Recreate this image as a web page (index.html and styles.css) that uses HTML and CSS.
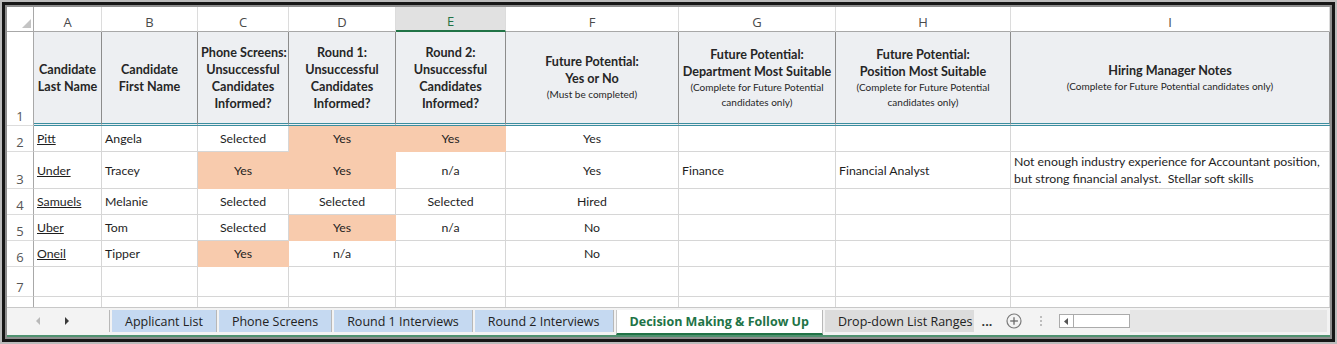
FILE: index.html
```html
<!DOCTYPE html>
<html lang="en">
<head>
  <meta charset="UTF-8">
  <meta name="viewport" content="width=device-width, initial-scale=1.0">
  <title>Decision Making &amp; Follow Up</title>
  <link rel="stylesheet" href="styles.css">
</head>
<body>
  <div class="frame">
    <div class="frame-mid">
      <div class="window">

        <!-- Worksheet grid -->
        <div class="sheet">
          <table class="grid">
            <colgroup>
              <col class="w-rn">
              <col class="w-a">
              <col class="w-b">
              <col class="w-c">
              <col class="w-d">
              <col class="w-e">
              <col class="w-f">
              <col class="w-g">
              <col class="w-h">
              <col class="w-i">
            </colgroup>
            <thead>
              <tr class="letters">
                <th class="corner"><div class="corner-box"><span class="corner-tri"></span></div></th>
                <th class="col">A</th>
                <th class="col">B</th>
                <th class="col">C</th>
                <th class="col">D</th>
                <th class="col sel">E</th>
                <th class="col">F</th>
                <th class="col">G</th>
                <th class="col">H</th>
                <th class="col">I</th>
              </tr>
            </thead>
            <tbody>
              <tr class="head">
                <th class="rn">1</th>
                <td>Candidate<br>Last Name</td>
                <td>Candidate<br>First Name</td>
                <td>Phone Screens:<br>Unsuccessful<br>Candidates<br>Informed?</td>
                <td>Round 1:<br>Unsuccessful<br>Candidates<br>Informed?</td>
                <td>Round 2:<br>Unsuccessful<br>Candidates<br>Informed?</td>
                <td>Future Potential:<br>Yes or No<span class="note">(Must be completed)</span></td>
                <td>Future Potential:<br>Department Most Suitable<span class="note">(Complete for Future Potential<br>candidates only)</span></td>
                <td>Future Potential:<br>Position Most Suitable<span class="note">(Complete for Future Potential<br>candidates only)</span></td>
                <td>Hiring Manager Notes<span class="note">(Complete for Future Potential candidates only)</span></td>
              </tr>
              <tr class="row">
                <th class="rn">2</th>
                <td class="link">Pitt</td>
                <td>Angela</td>
                <td class="c">Selected</td>
                <td class="c fill">Yes</td>
                <td class="c fill">Yes</td>
                <td class="c">Yes</td>
                <td></td>
                <td></td>
                <td></td>
              </tr>
              <tr class="row-tall">
                <th class="rn">3</th>
                <td class="link">Under</td>
                <td>Tracey</td>
                <td class="c fill">Yes</td>
                <td class="c fill">Yes</td>
                <td class="c">n/a</td>
                <td class="c">Yes</td>
                <td>Finance</td>
                <td>Financial Analyst</td>
                <td class="notes">Not enough industry experience for Accountant position,<br>but strong financial analyst.&nbsp; Stellar soft skills</td>
              </tr>
              <tr class="row">
                <th class="rn">4</th>
                <td class="link">Samuels</td>
                <td>Melanie</td>
                <td class="c">Selected</td>
                <td class="c">Selected</td>
                <td class="c">Selected</td>
                <td class="c">Hired</td>
                <td></td>
                <td></td>
                <td></td>
              </tr>
              <tr class="row">
                <th class="rn">5</th>
                <td class="link">Uber</td>
                <td>Tom</td>
                <td class="c">Selected</td>
                <td class="c fill">Yes</td>
                <td class="c">n/a</td>
                <td class="c">No</td>
                <td></td>
                <td></td>
                <td></td>
              </tr>
              <tr class="row">
                <th class="rn">6</th>
                <td class="link">Oneil</td>
                <td>Tipper</td>
                <td class="c fill">Yes</td>
                <td class="c">n/a</td>
                <td></td>
                <td class="c">No</td>
                <td></td>
                <td></td>
                <td></td>
              </tr>
              <tr class="row-end">
                <th class="rn">7</th>
                <td></td><td></td><td></td><td></td><td></td><td></td><td></td><td></td><td></td>
              </tr>
              <tr class="row">
                <th class="rn"></th>
                <td></td><td></td><td></td><td></td><td></td><td></td><td></td><td></td><td></td>
              </tr>
            </tbody>
          </table>
        </div>

        <!-- Sheet tabs + horizontal scroll -->
        <div class="tabbar">
          <div class="nav">
            <svg class="arrow" width="5" height="8" viewBox="0 0 5 8"><polygon points="4,0 4,8 0,4" fill="#b9b9b9"/></svg>
            <svg class="arrow" width="5" height="8" viewBox="0 0 5 8"><polygon points="0,0 0,8 4,4" fill="#3a3a3a"/></svg>
          </div>
          <div class="tabs">
            <div class="tab">Applicant List</div>
            <div class="tab">Phone Screens</div>
            <div class="tab">Round 1 Interviews</div>
            <div class="tab">Round 2 Interviews</div>
            <div class="tab active">Decision Making &amp; Follow Up</div>
            <div class="tab plain clip">Drop-down List Ranges</div>
          </div>
          <div class="more">...</div>
          <div class="add">
            <svg width="16" height="16" viewBox="0 0 16 16">
              <circle cx="8" cy="8" r="7" fill="none" stroke="#7a7a7a" stroke-width="1.2"/>
              <line x1="8" y1="4.2" x2="8" y2="11.8" stroke="#6a6a6a" stroke-width="1.3"/>
              <line x1="4.2" y1="8" x2="11.8" y2="8" stroke="#6a6a6a" stroke-width="1.3"/>
            </svg>
          </div>
          <div class="vdots"><span></span><span></span><span></span></div>
          <div class="hscroll">
            <div class="sb-btn">
              <svg width="4" height="7" viewBox="0 0 4 7"><polygon points="4,0 4,7 0,3.5" fill="#555"/></svg>
            </div>
            <div class="sb-thumb"></div>
          </div>
        </div>

      </div>
    </div>
  </div>
</body>
</html>
```

FILE: styles.css
```css
* {
  box-sizing: border-box;
}

body {
  margin: 0;
  width: 1337px;
  height: 344px;
  overflow: hidden;
  font-family: Lato, "Liberation Sans", sans-serif;
  background-color: #ffffff;
}

/* Window frame */
.frame {
  width: 1337px;
  height: 344px;
  border: 2px solid #bcbcbc;
}

.frame-mid {
  height: 100%;
  border: 3px solid #161616;
}

.window {
  height: 100%;
  display: flex;
  flex-direction: column;
  border: 2px solid #8e8e8e;
  background: #ffffff;
}

/* Grid */
.sheet {
  height: 300px;
  overflow: hidden;
}

.grid {
  width: 1323px;
  table-layout: fixed;
  border-collapse: separate;
  border-spacing: 0;
  font-size: 12.3px;
  color: #1e1e1e;
}

.w-rn { width: 27px; }
.w-a { width: 68px; }
.w-b { width: 96px; }
.w-c { width: 91px; }
.w-d { width: 107px; }
.w-e { width: 110px; }
.w-f { width: 173px; }
.w-g { width: 157px; }
.w-h { width: 175px; }
.w-i { width: 319px; }

.grid td,
.grid th {
  padding: 0 3px;
  border-right: 1px solid #d6d6d6;
  border-bottom: 1px solid #d6d6d6;
  white-space: nowrap;
  overflow: hidden;
  font-weight: 400;
}

/* Column letters */
.letters th {
  height: 25px;
  vertical-align: bottom;
}

.col {
  font-family: "Open Sans", sans-serif;
  font-size: 13px;
  line-height: 18px;
  color: #4a4a4a;
  text-align: center;
  border-right-color: #dcdcdc !important;
  border-bottom-color: #a8a8a8 !important;
}

.col.sel {
  background: #e1e1e1;
  color: #217346;
  border-bottom: 2px solid #217346 !important;
}

.corner {
  padding: 0 !important;
  border-right-color: #a8a8a8 !important;
  border-bottom-color: #a8a8a8 !important;
}

.corner-box {
  display: flex;
  justify-content: flex-end;
  align-items: flex-end;
  height: 24px;
  padding: 0 2px 3px 0;
}

.corner-tri {
  width: 0;
  height: 0;
  border-left: 9px solid transparent;
  border-bottom: 9px solid #c4c4c4;
}

/* Row numbers */
.rn {
  font-family: "Open Sans", sans-serif;
  font-size: 13px;
  line-height: 18px;
  color: #555555;
  text-align: center;
  vertical-align: bottom;
  padding: 0 !important;
  border-right-color: #a8a8a8 !important;
  border-bottom-color: #dcdcdc !important;
}

/* Heading row */
.head td {
  height: 94px;
  background: #edeff2;
  text-align: center;
  vertical-align: middle;
  font-size: 12.6px;
  font-weight: 700;
  line-height: 17px;
  color: #262626;
  border-right-color: #8c8c8c;
  border-bottom: 3px double #3b8e9f;
}

.head .rn {
  border-bottom: 1px solid #dcdcdc;
}

.note {
  display: block;
  font-size: 10px;
  font-weight: 400;
  line-height: 15px;
}

/* Data rows */
.row td, .row th { height: 26px; }
.row-tall td, .row-tall th { height: 37px; }
.row-end td, .row-end th { height: 30px; }

.grid td {
  vertical-align: middle;
}

.c {
  text-align: center;
}

.link {
  text-decoration: underline;
}

.fill {
  background: #f8cbad;
  border-right-color: #f8cbad !important;
  border-bottom-color: #f8cbad !important;
}

.notes {
  line-height: 17px;
}

/* Tab bar */
.tabbar {
  flex: 1;
  display: flex;
  align-items: stretch;
  padding: 2px 0 3px;
  background: #f3f3f3;
  border-top: 1px solid #c8c8c8;
  border-bottom: 2px solid #4f9270;
  font-family: "Open Sans", sans-serif;
  font-size: 12.5px;
  color: #222222;
}

.nav {
  width: 103px;
  display: flex;
  align-items: center;
  gap: 24px;
  padding-left: 29px;
  border-right: 1px solid #b8b8b8;
}

.tabs {
  display: flex;
}

.tab {
  display: flex;
  align-items: center;
  padding: 0 13px;
  margin-left: 2px;
  background: #c5d9f1;
  border-right: 1px solid #b8b8b8;
  white-space: nowrap;
}

.tab.active {
  background: #ffffff;
  color: #217346;
  font-weight: 700;
  border-left: 1px solid #c8c8c8;
  border-bottom: 2px solid #217346;
  margin-bottom: -3px;
}

.tab.plain {
  background: #dcdcdc;
  border-right: none;
}

.tab.clip {
  width: 149px;
  padding-right: 0;
  overflow: hidden;
}

.more {
  width: 26px;
  display: flex;
  align-items: center;
  justify-content: center;
  font-weight: 700;
  color: #333333;
}

.add {
  width: 28px;
  display: flex;
  align-items: center;
  justify-content: center;
}

.vdots {
  width: 26px;
  display: flex;
  flex-direction: column;
  align-items: center;
  justify-content: center;
  gap: 2px;
}

.vdots span {
  width: 2px;
  height: 2px;
  background: #bdbdbd;
}

.hscroll {
  flex: 1;
  margin-left: 5px;
  margin-right: 3px;
  display: flex;
  align-items: center;
  background: linear-gradient(to right, #f3f3f3 0, #f3f3f3 71px, #e6e6e6 71px);
}

.sb-btn {
  width: 15px;
  height: 14px;
  display: flex;
  align-items: center;
  justify-content: center;
  background: #ffffff;
  border: 1px solid #ababab;
}

.sb-thumb {
  width: 56px;
  height: 14px;
  background: #ffffff;
  border: 1px solid #ababab;
  border-left: none;
}
```
